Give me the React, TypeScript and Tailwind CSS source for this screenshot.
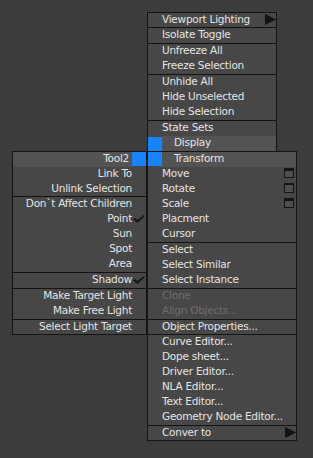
import React from "react";

type Row = {
    label?: string;
    sep?: boolean;
    h?: number;
    dim?: boolean;
    check?: boolean;
    box?: number;
    arrow?: boolean;
    title?: boolean;
    low?: boolean;
};

const topMenu: Row[] = [
    { label: "Viewport Lighting", h: 14, arrow: true },
    { sep: true },
    { label: "Isolate Toggle" },
    { sep: true },
    { label: "Unfreeze All" },
    { label: "Freeze Selection" },
    { sep: true },
    { label: "Unhide All" },
    { label: "Hide Unselected" },
    { label: "Hide Selection" },
    { sep: true },
    { label: "State Sets" },
    { label: "Display", title: true, low: true },
];

const transformMenu: Row[] = [
    { label: "Transform", title: true },
    { label: "Move", box: 3 },
    { label: "Rotate", box: 2 },
    { label: "Scale", box: 3 },
    { label: "Placment" },
    { label: "Cursor" },
    { sep: true },
    { label: "Select" },
    { label: "Select Similar" },
    { label: "Select Instance" },
    { sep: true },
    { label: "Clone", dim: true },
    { label: "Align Objects...", dim: true },
    { sep: true },
    { label: "Object Properties...", h: 14 },
    { sep: true },
    { label: "Curve Editor..." },
    { label: "Dope sheet..." },
    { label: "Driver Editor..." },
    { label: "NLA Editor..." },
    { label: "Text Editor..." },
    { label: "Geometry Node Editor..." },
    { sep: true },
    { label: "Conver to", h: 14, arrow: true },
];

const toolMenu: Row[] = [
    { label: "Tool2", title: true },
    { label: "Link To" },
    { label: "Unlink Selection", h: 14 },
    { sep: true },
    { label: "Don`t Affect Children" },
    { label: "Point", check: true },
    { label: "Sun" },
    { label: "Spot" },
    { label: "Area" },
    { sep: true },
    { label: "Shadow", check: true },
    { sep: true },
    { label: "Make Target Light" },
    { label: "Make Free Light" },
    { sep: true },
    { label: "Select Light Target", h: 14 },
];

function Arrow() {
    return (
        <svg width="11" height="11" viewBox="0 0 11 11" className="mt-[1px] shrink-0">
            <polygon points="0,0 11,5.5 0,11" fill="#121212" />
        </svg>
    );
}

function Check() {
    return (
        <svg width="12" height="8" viewBox="0 0 12 8" className="mt-[3px] ml-[1px]">
            <polygon points="0,4.2 2.2,3 4.3,5 10.8,0 12,1 4.4,8" fill="#161616" />
        </svg>
    );
}

function Box({ top }: { top: number }) {
    return (
        <div
            className={`mt-[1px] mr-[2px] h-[10px] w-[10px] shrink-0 border border-[#141414] bg-[#4e4e4e] ${
                top === 3 ? "border-t-[3px]" : "border-t-[2px]"
            }`}
        />
    );
}

function RightRow({ row }: { row: Row }) {
    if (row.sep) return <div className="h-px bg-[#141414]" />;
    const h = row.h === 14 ? "h-[14px]" : "h-[15px]";
    return (
        <div className={`flex ${h} leading-[12px]`}>
            <div className="w-[14px] shrink-0">
                {row.title && (
                    <div className={`h-[14px] bg-[#1684fc] ${row.low ? "mt-[1px]" : ""}`} />
                )}
            </div>
            <div
                className={`flex flex-1 ${row.title ? "bg-[#535353] pl-[12px]" : ""} ${
                    row.dim ? "text-[#6c6c6c]" : ""
                }`}
            >
                <span className="flex-1 whitespace-nowrap">{row.label}</span>
                {row.arrow && <Arrow />}
                {row.box && <Box top={row.box} />}
            </div>
        </div>
    );
}

function LeftRow({ row }: { row: Row }) {
    if (row.sep) return <div className="h-px bg-[#141414]" />;
    const h = row.h === 14 ? "h-[14px]" : "h-[15px]";
    return (
        <div className={`flex ${h} leading-[12px]`}>
            <div
                className={`flex-1 whitespace-nowrap text-right ${
                    row.title ? "bg-[#535353] pr-[3px]" : ""
                }`}
            >
                {row.label}
            </div>
            <div className="w-[14px] shrink-0">
                {row.title && <div className="h-[14px] bg-[#1684fc]" />}
                {row.check && <Check />}
            </div>
        </div>
    );
}

export default function App() {
    return (
        <div className="min-h-screen w-full bg-[#3c3c3c] font-['DejaVu_Sans',sans-serif] text-[10.5px] tracking-[-0.25px] text-[#e4e4e4]">
            <div className="flex items-start">
                <div className="ml-[12px] mt-[151px] w-[135px] border border-[#141414] bg-[#474747]">
                    {toolMenu.map((r, i) => (
                        <LeftRow key={i} row={r} />
                    ))}
                </div>
                <div className="mt-[12px] flex flex-col">
                    <div className="w-[130px] border border-b-0 border-[#141414] bg-[#474747]">
                        {topMenu.map((r, i) => (
                            <RightRow key={i} row={r} />
                        ))}
                    </div>
                    <div className="w-[150px] border border-[#141414] bg-[#474747]">
                        {transformMenu.map((r, i) => (
                            <RightRow key={i} row={r} />
                        ))}
                    </div>
                </div>
            </div>
        </div>
    );
}
